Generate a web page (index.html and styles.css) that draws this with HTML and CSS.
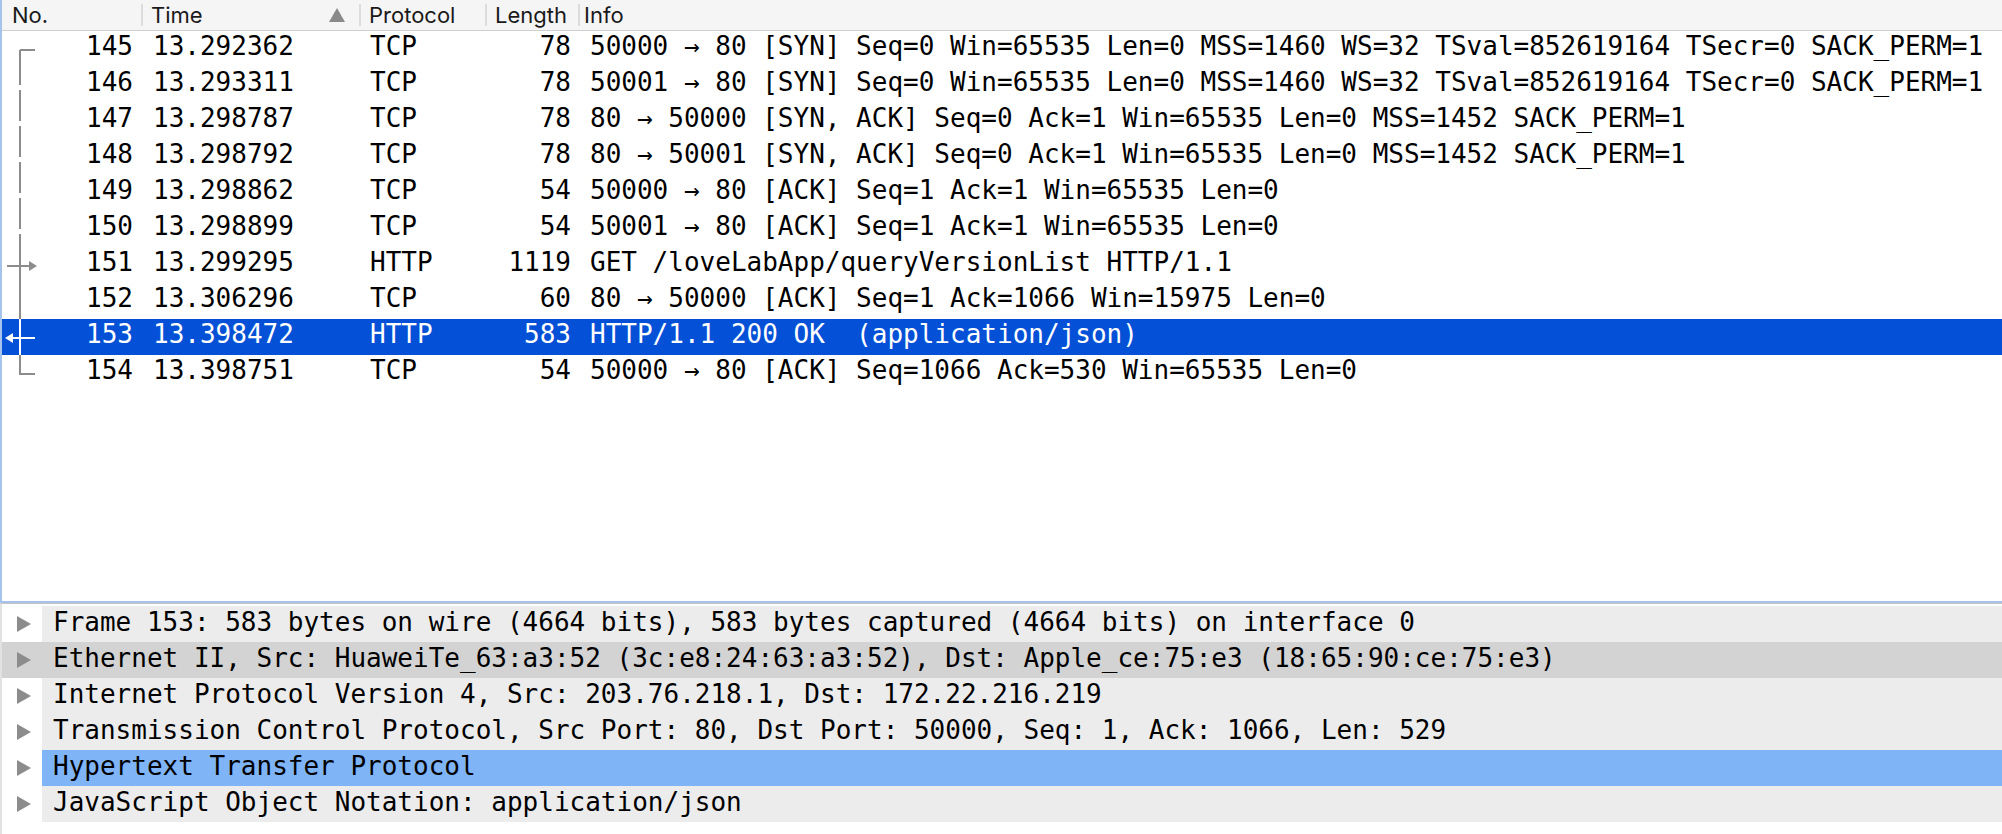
FILE: index.html
```html
<!DOCTYPE html>
<html>
<head>
<meta charset="utf-8">
<link rel="stylesheet" href="styles.css">
</head>
<body>
<div class="app">
  <section class="list">
    <div class="hdr">
      <div class="hc">No.</div>
      <div class="hc hc-time"><span>Time</span><svg class="sort" width="16" height="14" viewBox="0 0 16 14"><polygon points="8,0 16,14 0,14"/></svg></div>
      <div class="hc">Protocol</div>
      <div class="hc">Length</div>
      <div class="hc hc-info">Info</div>
    </div>
    <div class="rows">
      <div class="row">
        <div class="c-no"><svg class="rel" width="40" height="36" viewBox="0 0 40 36"><path class="ln" d="M18 19H33"/><path class="ln dash" d="M18 19V36"/></svg><span>145</span></div>
        <div class="c-time">13.292362</div><div class="c-proto">TCP</div><div class="c-len">78</div>
        <div class="c-info">50000 → 80 [SYN] Seq=0 Win=65535 Len=0 MSS=1460 WS=32 TSval=852619164 TSecr=0 SACK_PERM=1</div>
      </div>
      <div class="row">
        <div class="c-no"><svg class="rel" width="40" height="36" viewBox="0 0 40 36"><path class="ln dash" d="M18 -2V36"/></svg><span>146</span></div>
        <div class="c-time">13.293311</div><div class="c-proto">TCP</div><div class="c-len">78</div>
        <div class="c-info">50001 → 80 [SYN] Seq=0 Win=65535 Len=0 MSS=1460 WS=32 TSval=852619164 TSecr=0 SACK_PERM=1</div>
      </div>
      <div class="row">
        <div class="c-no"><svg class="rel" width="40" height="36" viewBox="0 0 40 36"><path class="ln dash" d="M18 -2V36"/></svg><span>147</span></div>
        <div class="c-time">13.298787</div><div class="c-proto">TCP</div><div class="c-len">78</div>
        <div class="c-info">80 → 50000 [SYN, ACK] Seq=0 Ack=1 Win=65535 Len=0 MSS=1452 SACK_PERM=1</div>
      </div>
      <div class="row">
        <div class="c-no"><svg class="rel" width="40" height="36" viewBox="0 0 40 36"><path class="ln dash" d="M18 -2V36"/></svg><span>148</span></div>
        <div class="c-time">13.298792</div><div class="c-proto">TCP</div><div class="c-len">78</div>
        <div class="c-info">80 → 50001 [SYN, ACK] Seq=0 Ack=1 Win=65535 Len=0 MSS=1452 SACK_PERM=1</div>
      </div>
      <div class="row">
        <div class="c-no"><svg class="rel" width="40" height="36" viewBox="0 0 40 36"><path class="ln dash" d="M18 -2V36"/></svg><span>149</span></div>
        <div class="c-time">13.298862</div><div class="c-proto">TCP</div><div class="c-len">54</div>
        <div class="c-info">50000 → 80 [ACK] Seq=1 Ack=1 Win=65535 Len=0</div>
      </div>
      <div class="row">
        <div class="c-no"><svg class="rel" width="40" height="36" viewBox="0 0 40 36"><path class="ln dash" d="M18 -2V36"/></svg><span>150</span></div>
        <div class="c-time">13.298899</div><div class="c-proto">TCP</div><div class="c-len">54</div>
        <div class="c-info">50001 → 80 [ACK] Seq=1 Ack=1 Win=65535 Len=0</div>
      </div>
      <div class="row">
        <div class="c-no"><svg class="rel" width="40" height="36" viewBox="0 0 40 36"><path class="ln dash" d="M18 -2V19"/><path class="ln" d="M18 19V36M5 19H28"/><polygon class="hd" points="27,14 35,19 27,24"/></svg><span>151</span></div>
        <div class="c-time">13.299295</div><div class="c-proto">HTTP</div><div class="c-len">1119</div>
        <div class="c-info">GET /loveLabApp/queryVersionList HTTP/1.1</div>
      </div>
      <div class="row">
        <div class="c-no"><svg class="rel" width="40" height="36" viewBox="0 0 40 36"><path class="ln" d="M18 0V36"/></svg><span>152</span></div>
        <div class="c-time">13.306296</div><div class="c-proto">TCP</div><div class="c-len">60</div>
        <div class="c-info">80 → 50000 [ACK] Seq=1 Ack=1066 Win=15975 Len=0</div>
      </div>
      <div class="row sel">
        <div class="c-no"><svg class="rel" width="40" height="36" viewBox="0 0 40 36"><path class="ln" d="M18 0V36M10 19H33"/><polygon class="hd" points="11,14 3,19 11,24"/></svg><span>153</span></div>
        <div class="c-time">13.398472</div><div class="c-proto">HTTP</div><div class="c-len">583</div>
        <div class="c-info">HTTP/1.1 200 OK  (application/json)</div>
      </div>
      <div class="row">
        <div class="c-no"><svg class="rel" width="40" height="36" viewBox="0 0 40 36"><path class="ln" d="M18 0V19H33"/></svg><span>154</span></div>
        <div class="c-time">13.398751</div><div class="c-proto">TCP</div><div class="c-len">54</div>
        <div class="c-info">50000 → 80 [ACK] Seq=1066 Ack=530 Win=65535 Len=0</div>
      </div>
    </div>
  </section>
  <section class="detail">
    <div class="drow"><div class="tri"><svg width="14" height="16" viewBox="0 0 14 16"><polygon points="0,0 14,8 0,16"/></svg></div><div class="dtxt">Frame 153: 583 bytes on wire (4664 bits), 583 bytes captured (4664 bits) on interface 0</div></div>
    <div class="drow hover"><div class="tri"><svg width="14" height="16" viewBox="0 0 14 16"><polygon points="0,0 14,8 0,16"/></svg></div><div class="dtxt">Ethernet II, Src: HuaweiTe_63:a3:52 (3c:e8:24:63:a3:52), Dst: Apple_ce:75:e3 (18:65:90:ce:75:e3)</div></div>
    <div class="drow"><div class="tri"><svg width="14" height="16" viewBox="0 0 14 16"><polygon points="0,0 14,8 0,16"/></svg></div><div class="dtxt">Internet Protocol Version 4, Src: 203.76.218.1, Dst: 172.22.216.219</div></div>
    <div class="drow"><div class="tri"><svg width="14" height="16" viewBox="0 0 14 16"><polygon points="0,0 14,8 0,16"/></svg></div><div class="dtxt">Transmission Control Protocol, Src Port: 80, Dst Port: 50000, Seq: 1, Ack: 1066, Len: 529</div></div>
    <div class="drow dsel"><div class="tri"><svg width="14" height="16" viewBox="0 0 14 16"><polygon points="0,0 14,8 0,16"/></svg></div><div class="dtxt">Hypertext Transfer Protocol</div></div>
    <div class="drow"><div class="tri"><svg width="14" height="16" viewBox="0 0 14 16"><polygon points="0,0 14,8 0,16"/></svg></div><div class="dtxt">JavaScript Object Notation: application/json</div></div>
  </section>
</div>
</body>
</html>
```

FILE: styles.css
```css
html, body {
  margin: 0;
  padding: 0;
  background: #ffffff;
}
body {
  width: 2002px;
  height: 834px;
  overflow: hidden;
  font-family: "DejaVu Sans Mono", "Liberation Mono", monospace;
  color: #000;
}
.app {
  display: flex;
  flex-direction: column;
  height: 834px;
}
.list {
  height: 601px;
  border-left: 2px solid #a6c3ee;
  border-bottom: 2px solid #a6c3ee;
  display: flex;
  flex-direction: column;
  background: #fff;
}
.hdr {
  display: grid;
  grid-template-columns: 139px 218px 126px 93px 1fr;
  height: 30px;
  border-bottom: 1px solid #cfcfcf;
  background: #f5f5f5;
  font-family: "Inter", "Liberation Sans", sans-serif;
  font-size: 22px;
  color: #1a1a1a;
}
.hc {
  display: flex;
  align-items: center;
  padding-left: 10px;
  background: linear-gradient(#dcdcdc, #dcdcdc) no-repeat left center / 2px 22px;
  line-height: 30px;
}
.hdr .hc:first-child {
  background: none;
}
.hc-time {
  justify-content: space-between;
  padding-right: 14px;
}
.hc-info {
  padding-left: 6px;
}
.sort {
  fill: #8a8a8a;
}
.row {
  display: grid;
  grid-template-columns: 139px 218px 126px 93px 1fr;
  height: 36px;
  font-size: 26px;
  line-height: 30px;
  white-space: pre;
}
.row > div {
  height: 36px;
  overflow: hidden;
}
.c-no {
  display: flex;
  justify-content: space-between;
  padding-right: 8px;
}
.rel {
  flex: none;
}
.ln {
  fill: none;
  stroke: #8c8c8c;
  stroke-width: 2;
}
.dash {
  stroke-dasharray: 20 5;
}
.hd {
  fill: #8c8c8c;
}
.c-time {
  padding-left: 12px;
}
.c-proto {
  padding-left: 11px;
}
.c-len {
  text-align: right;
  padding-right: 7px;
}
.c-info {
  padding-left: 12px;
}
.sel {
  background: #0450d6;
  color: #fff;
}
.sel .ln {
  stroke: #fff;
}
.sel .hd {
  fill: #fff;
}
.detail {
  flex: 1;
  border-top: 1px solid #c4c4c4;
  border-left: 2px solid #e2e2e2;
  padding-top: 2px;
  background: #fff;
}
.drow {
  display: flex;
  height: 36px;
  font-size: 26px;
  line-height: 32px;
  white-space: pre;
}
.tri {
  width: 40px;
  height: 36px;
  flex: none;
  display: flex;
  align-items: center;
  padding-left: 15px;
  box-sizing: border-box;
}
.tri svg {
  fill: #8c8c8c;
}
.dtxt {
  flex: 1;
  height: 36px;
  background: #ececec;
  padding-left: 11px;
}
.hover {
  background: #d3d3d3;
}
.hover .dtxt {
  background: #d3d3d3;
}
.dsel .dtxt {
  background: #7fb4f6;
}
```
